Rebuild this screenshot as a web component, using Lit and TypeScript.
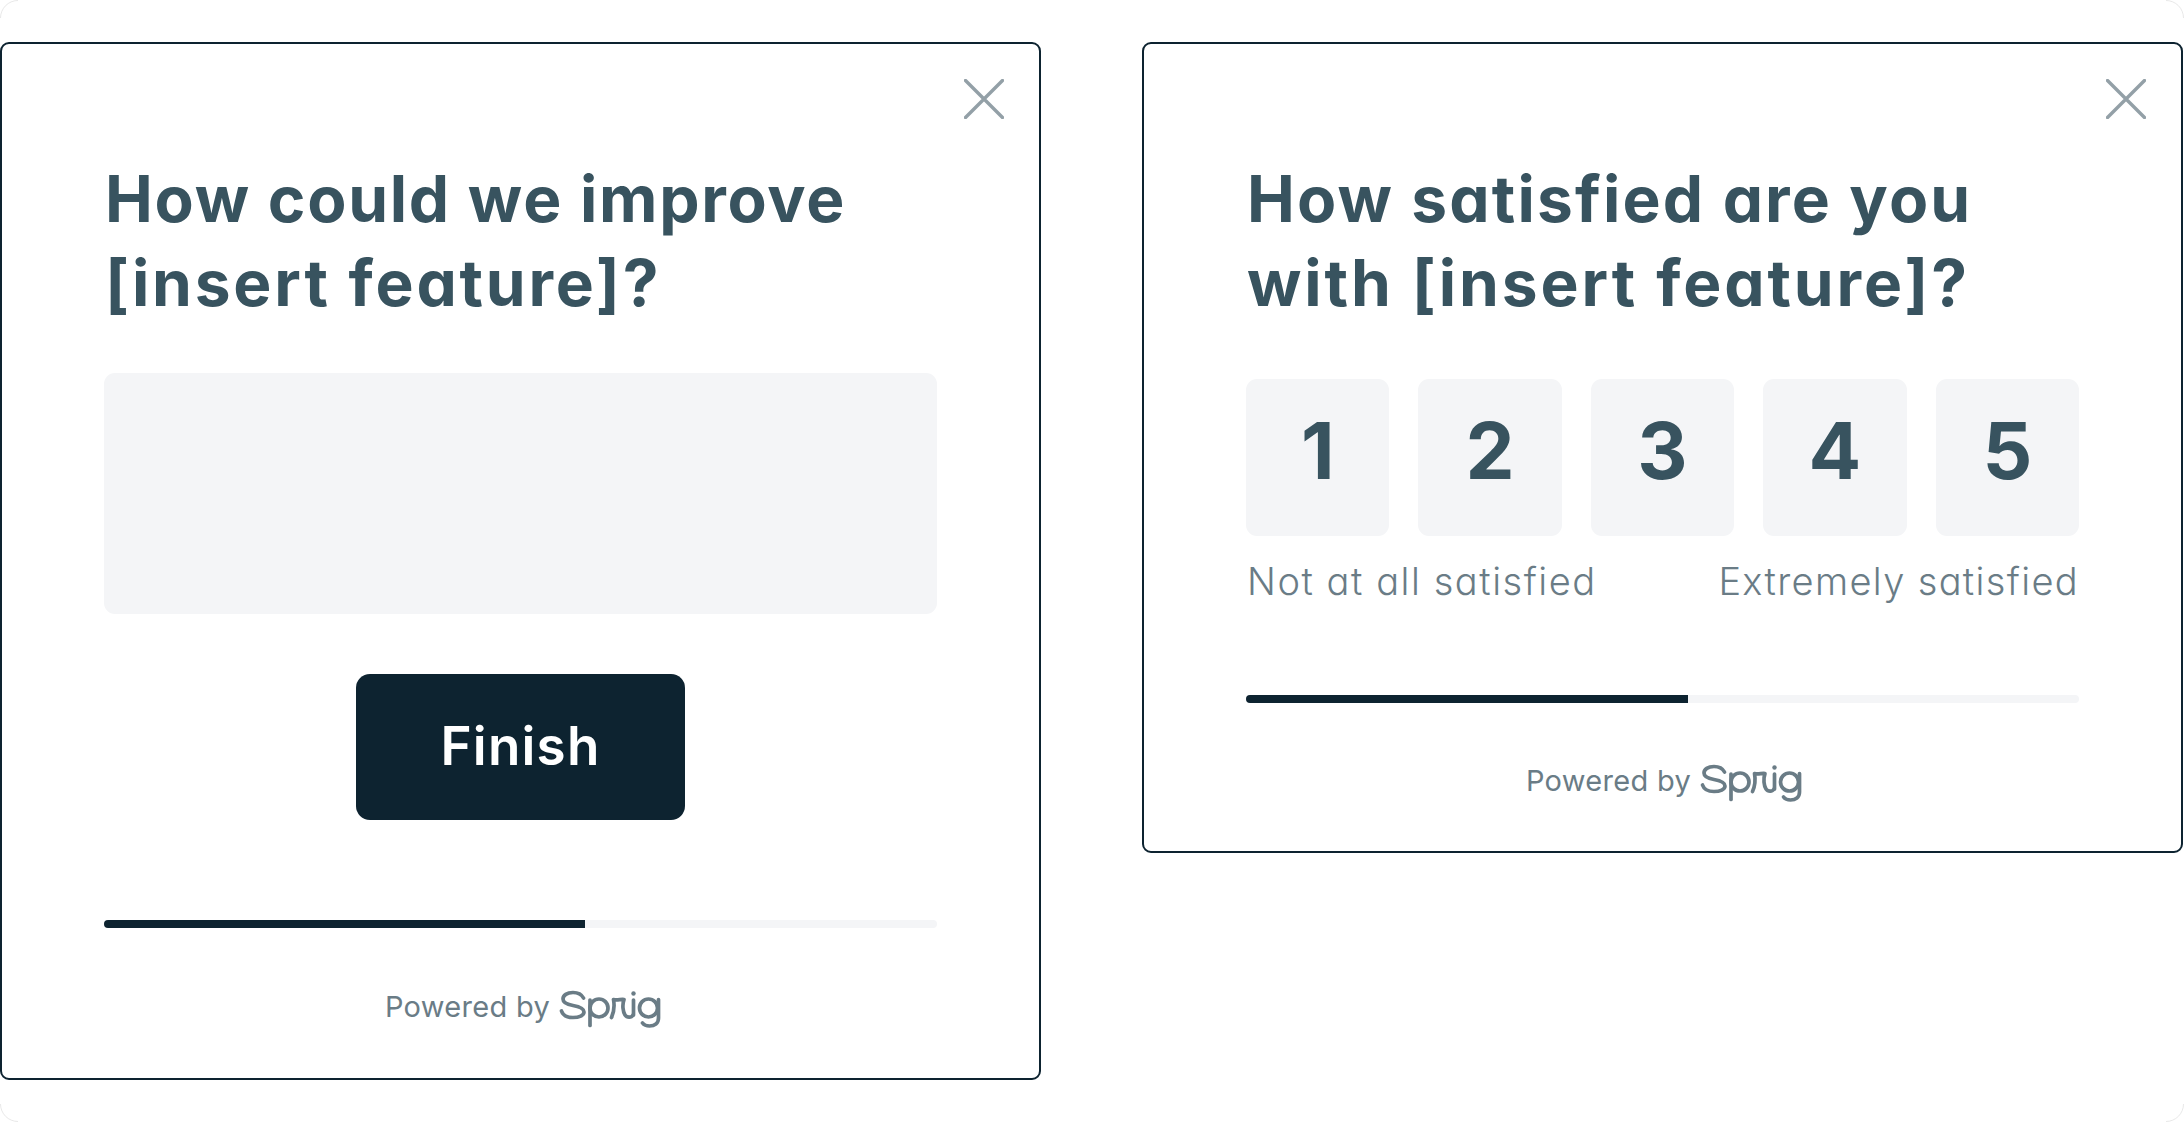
import { LitElement, html, css, svg } from "lit";
import { customElement } from "lit/decorators.js";

const sprigLogo = html`<svg class="logo" viewBox="0 0 106 40" width="106" height="40" fill="none" stroke="#6a7c86" stroke-width="3.700" stroke-linecap="round" stroke-linejoin="round" role="img" aria-label="Sprig">
  <path d="M25.500 10C23.500 6.200 19.500 4.500 15 4.500C9 4.500 5 7.300 5 11C5 15 9 16.500 15 17.500C21 18.500 26 20 26 24C26 27.500 21 29.500 15 29.500C9 29.500 5 27.500 3.500 23" />
  <path d="M32 12V37.500" />
  <circle cx="41" cy="20" r="9" />
  <path d="M53.500 29.500C56 24 56.500 17 55.500 11.500C59 12.500 63 11 66 11.500C64 17 65 24 67 27C69 30 73.500 29.800 75 27" />
  <path d="M75.500 12V27" />
  <circle cx="90.500" cy="20" r="9" />
  <path d="M100.500 11.500V30C100.500 35.500 96.500 38 91.500 38C88.500 38 86 37 84.500 35" />
  <circle cx="75.500" cy="5.500" r="2.200" fill="#6a7c86" stroke="none" />
</svg>`;

const closeIcon = html`<svg class="close" viewBox="0 0 40 40" width="40" height="40" fill="none" stroke="#93a0a7" stroke-width="3.400" stroke-linecap="round" role="img" aria-label="Close">
  <path d="M1.500 1.500L38.500 38.500M38.500 1.500L1.500 38.500" />
</svg>`;

@customElement("app-root")
export class AppRoot extends LitElement {
  static styles = css`
    :host {
      display: block;
      width: 2184px;
      height: 1122px;
      background: #ffffff;
      font-family: Inter, "Liberation Sans", sans-serif;
      font-feature-settings: "cv11" 1;
      overflow: hidden;
      position: relative;
    }
    .page {
      display: flex;
      align-items: flex-start;
      gap: 101px;
      padding-top: 42px;
    }
    .card {
      box-sizing: border-box;
      position: relative;
      width: 1041px;
      flex: none;
      border: 2px solid #0d2330;
      border-radius: 9px;
      background: #ffffff;
      padding: 113px 102px 50px 102px;
    }
    .card.short {
      padding-bottom: 49px;
    }
    .close {
      position: absolute;
      top: 35px;
      right: 35px;
      display: block;
    }
    h2 {
      margin: 0;
      padding-left: 1px;
      font-size: 64px;
      line-height: 84px;
      font-weight: 700;
      color: #38535f;
      white-space: nowrap;
    }
    h2 span {
      display: block;
    }
    .ls18 {
      letter-spacing: 1.75px;
    }
    .ls21 {
      letter-spacing: 2.15px;
    }
    .ls28 {
      letter-spacing: 2.8px;
    }
    .ls29 {
      letter-spacing: 2.9px;
    }
    .input {
      margin-top: 48px;
      height: 241px;
      background: #f4f5f7;
      border-radius: 11px;
    }
    .button {
      margin: 60px auto 0;
      width: 329px;
      height: 146px;
      border-radius: 14px;
      background: #0d2330;
      color: #ffffff;
      font-size: 53px;
      font-weight: 600;
      letter-spacing: 1.2px;
      display: flex;
      align-items: center;
      justify-content: center;
    }
    .button span {
      margin-top: -3px;
    }
    .track {
      height: 8px;
      border-radius: 4px;
      background: #f4f5f7;
      overflow: hidden;
    }
    .fill {
      height: 100%;
      background: #0d2330;
    }
    .tall .track {
      margin-top: 100px;
    }
    .short .track {
      margin-top: 92px;
    }
    .powered {
      display: flex;
      align-items: flex-start;
      justify-content: center;
      gap: 8px;
      color: #6a7c86;
      font-size: 29px;
      font-weight: 400;
      letter-spacing: 0.3px;
      line-height: 40px;
      height: 40px;
    }
    .powered span {
      margin-top: -1px;
    }
    .tall .powered {
      margin-top: 60px;
      padding-left: 8px;
    }
    .short .powered {
      margin-top: 59px;
      padding-left: 6px;
    }
    .logo {
      display: block;
      flex: none;
    }
    .rating {
      margin-top: 54px;
      display: flex;
      gap: 29px;
    }
    .num {
      flex: 1;
      height: 157px;
      border-radius: 11px;
      background: #f4f5f7;
      color: #38535f;
      font-size: 78px;
      font-weight: 700;
      line-height: 1;
      display: flex;
      justify-content: center;
      padding-top: 33px;
      box-sizing: border-box;
    }
    .labels {
      margin-top: 23px;
      padding-left: 1px;
      display: flex;
      justify-content: space-between;
      font-size: 38px;
      line-height: 44px;
      font-weight: 300;
      letter-spacing: 1.55px;
      color: #6a7c86;
    }
    .labels .end {
      letter-spacing: 1.35px;
    }
    .frame {
      position: absolute;
      inset: 0;
      pointer-events: none;
    }
  `;

  private footer(pct: number) {
    return html`
      <div class="track"><div class="fill" style="width:${pct}%"></div></div>
      <div class="powered"><span>Powered by</span>${sprigLogo}</div>
    `;
  }

  render() {
    return html`
      <div class="page">
        <section class="card tall">
          ${closeIcon}
          <h2><span class="ls18">How could we improve</span><span class="ls28">[insert feature]?</span></h2>
          <div class="input"></div>
          <div class="button"><span>Finish</span></div>
          ${this.footer(57.7)}
        </section>
        <section class="card short">
          ${closeIcon}
          <h2><span class="ls21">How satisfied are you</span><span class="ls29">with [insert feature]?</span></h2>
          <div class="rating">
            ${[1, 2, 3, 4, 5].map((n) => html`<div class="num">${n}</div>`)}
          </div>
          <div class="labels"><span>Not at all satisfied</span><span class="end">Extremely satisfied</span></div>
          ${this.footer(53.1)}
        </section>
      </div>
      <svg class="frame" viewBox="0 0 2184 1122" width="2184" height="1122" fill="none" stroke="#d8d8d8" stroke-width="0.6" aria-hidden="true">
        ${svg`<path d="M0.500 18A17.500 17.500 0 0 1 18 0.500M2166 0.500A17.500 17.500 0 0 1 2183.500 18M2183.500 1104A17.500 17.500 0 0 1 2166 1121.500M18 1121.500A17.500 17.500 0 0 1 0.500 1104" />`}
      </svg>
    `;
  }
}
